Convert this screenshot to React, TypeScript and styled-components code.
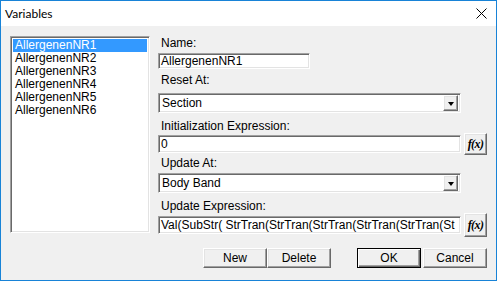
import React from "react";
import styled, { createGlobalStyle, css } from "styled-components";

const GlobalStyle = createGlobalStyle`
  * { box-sizing: border-box; }
  html, body { margin: 0; padding: 0; width: 497px; height: 281px; overflow: hidden; background: #f0f0f0; }
  body { font-family: "Liberation Sans", Arial, sans-serif; font-size: 12px; color: #000; }
`;

const sunken = css`
  border: 1px solid;
  border-color: #a0a0a0 #ffffff #ffffff #a0a0a0;
  box-shadow: inset 1px 1px 0 #696969, inset -1px -1px 0 #e3e3e3;
  background: #fff;
`;

const raised = css`
  border: 1px solid;
  border-color: #ffffff #696969 #696969 #ffffff;
  box-shadow: inset -1px -1px 0 #a0a0a0, inset 1px 1px 0 #e3e3e3;
  background: #f0f0f0;
`;

const Window = styled.div`
  width: 497px;
  height: 281px;
  border: 1px solid #1883d7;
  display: flex;
  flex-direction: column;
  background: #f0f0f0;
`;

const TitleBar = styled.div`
  height: 25px;
  background: #fff;
  display: flex;
  align-items: center;
  justify-content: space-between;
  padding: 0 9px 0 4px;
  font-family: Lato, "Noto Sans", sans-serif;
  font-size: 12px;
  color: #000;
`;

const Content = styled.div`
  flex: 1;
  padding: 10px 9px 0 9px;
  display: flex;
  flex-direction: column;
`;

const MainRow = styled.div`
  display: flex;
  align-items: flex-start;
  gap: 8px;
`;

const ListBox = styled.div`
  ${sunken};
  width: 140px;
  height: 197px;
  padding: 2px;
`;

const ListItem = styled.div<{ $selected?: boolean }>`
  height: 13px;
  line-height: 13px;
  padding-left: 2px;
  white-space: nowrap;
  background: ${p => (p.$selected ? "#3399ff" : "transparent")};
  color: ${p => (p.$selected ? "#fff" : "#000")};
`;

const Form = styled.div`
  width: 329px;
  display: flex;
  flex-direction: column;
  padding-top: 1px;
`;

const Label = styled.div<{ $mt?: number }>`
  height: 13px;
  line-height: 13px;
  padding-left: 3px;
  margin-top: ${p => p.$mt ?? 0}px;
  white-space: nowrap;
`;

const TextBox = styled.div<{ $w?: number; $h?: number; $mt?: number }>`
  ${sunken};
  width: ${p => (p.$w ? `${p.$w}px` : "auto")};
  flex: ${p => (p.$w ? "none" : "1")};
  min-width: 0;
  height: ${p => p.$h ?? 18}px;
  margin-top: ${p => p.$mt ?? 0}px;
  padding: 0 2px;
  display: flex;
  align-items: center;
  white-space: nowrap;
  overflow: hidden;
`;

const Combo = styled.div<{ $mt?: number }>`
  ${sunken};
  width: 303px;
  height: 20px;
  margin-top: ${p => p.$mt ?? 0}px;
  display: flex;
  align-items: center;
  padding: 2px 2px 2px 3px;
`;

const ComboText = styled.div`
  flex: 1;
  line-height: 16px;
`;

const ArrowButton = styled.div`
  ${raised};
  width: 15px;
  height: 16px;
  display: flex;
  align-items: center;
  justify-content: center;
`;

const Arrow = styled.div`
  width: 0;
  height: 0;
  border-left: 3.5px solid transparent;
  border-right: 3.5px solid transparent;
  border-top: 4px solid #000;
  margin-top: 1px;
`;

const ExprRow = styled.div<{ $h: number; $mt?: number }>`
  display: flex;
  align-items: center;
  gap: 3px;
  height: ${p => p.$h}px;
  margin-top: ${p => p.$mt ?? 0}px;
`;

const FxButton = styled.div<{ $h: number }>`
  ${raised};
  flex: none;
  width: 23px;
  height: ${p => p.$h}px;
  display: flex;
  align-items: center;
  justify-content: center;
  font-family: "Liberation Serif", "Times New Roman", serif;
  font-weight: bold;
  font-style: italic;
  font-size: 12px;
  letter-spacing: -0.6px;
`;

const Footer = styled.div`
  display: flex;
  justify-content: flex-end;
  margin-top: 11px;
  gap: 26px;
`;

const ButtonGroup = styled.div<{ $gap: number }>`
  display: flex;
  gap: ${p => p.$gap}px;
`;

const Button = styled.div<{ $default?: boolean }>`
  ${raised};
  width: 64px;
  height: 20px;
  display: flex;
  align-items: center;
  justify-content: center;
  ${p =>
    p.$default &&
    css`
      border: 1px solid #000;
      box-shadow: inset 1px 1px 0 #fff, inset -1px -1px 0 #696969, inset -2px -2px 0 #a0a0a0;
    `}
`;

const CloseIcon = () => (
  <svg width="11" height="11" viewBox="0 0 11 11">
    <path d="M0.5 0.5 L10.5 10.5 M10.5 0.5 L0.5 10.5" stroke="#000" strokeWidth="1" />
  </svg>
);

const items = ["AllergenenNR1", "AllergenenNR2", "AllergenenNR3", "AllergenenNR4", "AllergenenNR5", "AllergenenNR6"];

export default function App() {
  return (
    <>
      <GlobalStyle />
      <Window>
        <TitleBar>
          <span>Variables</span>
          <CloseIcon />
        </TitleBar>
        <Content>
          <MainRow>
            <ListBox>
              {items.map((it, i) => (
                <ListItem key={it} $selected={i === 0}>
                  {it}
                </ListItem>
              ))}
            </ListBox>
            <Form>
              <Label>Name:</Label>
              <TextBox $w={152} $h={16} $mt={3}>
                AllergenenNR1
              </TextBox>
              <Label $mt={5}>Reset At:</Label>
              <Combo $mt={6}>
                <ComboText>Section</ComboText>
                <ArrowButton>
                  <Arrow />
                </ArrowButton>
              </Combo>
              <Label $mt={7}>Initialization Expression:</Label>
              <ExprRow $h={22}>
                <TextBox>0</TextBox>
                <FxButton $h={22}>f(x)</FxButton>
              </ExprRow>
              <Label $mt={2}>Update At:</Label>
              <Combo $mt={3}>
                <ComboText>Body Band</ComboText>
                <ArrowButton>
                  <Arrow />
                </ArrowButton>
              </Combo>
              <Label $mt={7}>Update Expression:</Label>
              <ExprRow $h={24}>
                <TextBox>Val(SubStr( StrTran(StrTran(StrTran(StrTran(StrTran(St</TextBox>
                <FxButton $h={24}>f(x)</FxButton>
              </ExprRow>
            </Form>
          </MainRow>
          <Footer>
            <ButtonGroup $gap={0}>
              <Button>New</Button>
              <Button>Delete</Button>
            </ButtonGroup>
            <ButtonGroup $gap={2}>
              <Button $default>OK</Button>
              <Button>Cancel</Button>
            </ButtonGroup>
          </Footer>
        </Content>
      </Window>
    </>
  );
}
